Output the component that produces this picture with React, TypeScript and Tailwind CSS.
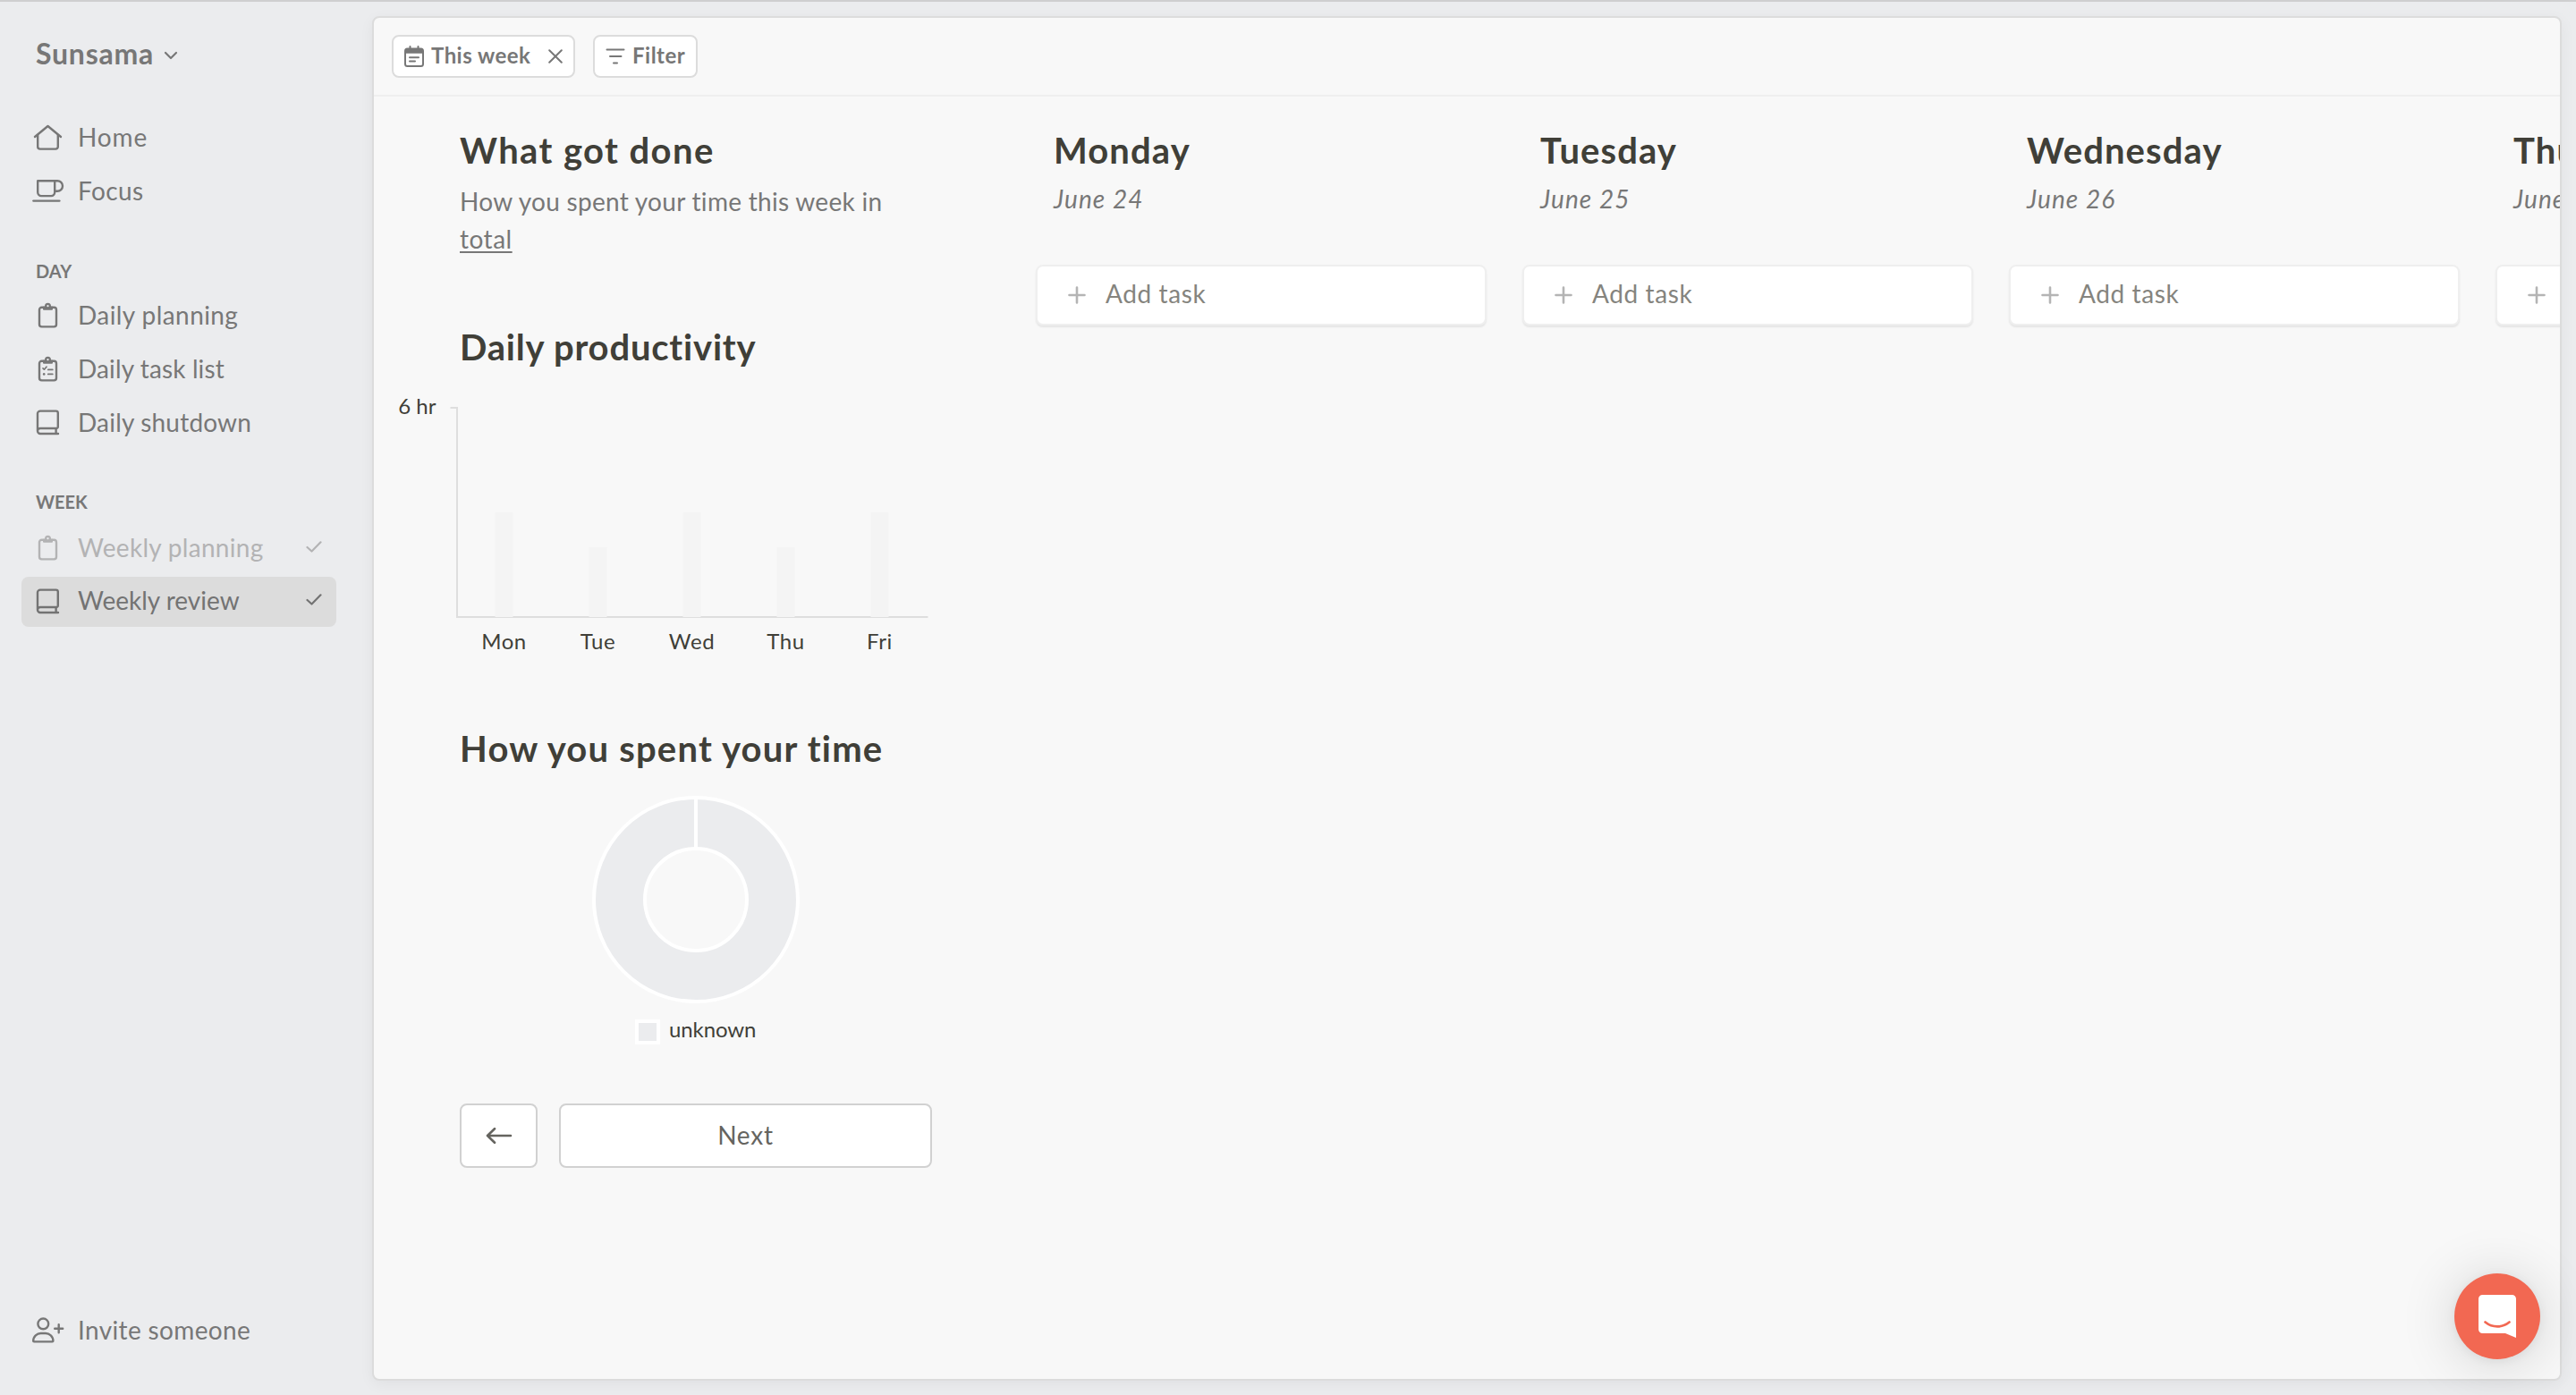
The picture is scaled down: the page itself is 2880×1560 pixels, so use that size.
import React from 'react';

type IconName = 'home' | 'cup' | 'clipboard' | 'tasks' | 'book' | 'invite';

function Clipboard({ withList }: { withList?: boolean }) {
  return (
    <>
      <rect x="8" y="8.8" width="19" height="21.6" rx="2.6" />
      <path d="M12 7.8h2.4a3.2 3.200 0 0 1 6.200 0H23v3a1 1 0 0 1-1 1h-9a1 1 0 0 1-1-1z" fill="currentColor" stroke="none" />
      <circle cx="17.5" cy="7.2" r="2.3" strokeWidth="2.4" className="fill-[#ebecee]" />
      {withList && (
        <>
          <path d="M12 16.800l1.400 1.400 2.600-3" strokeWidth="1.7" />
          <path d="M17.800 18.400h5M17.800 23.400h5" strokeWidth="1.8" />
          <circle cx="13.200" cy="23.400" r="1.3" fill="currentColor" stroke="none" />
        </>
      )}
    </>
  );
}

function Icon({ name }: { name: IconName }) {
  return (
    <svg
      className="h-9 w-9 shrink-0"
      viewBox="0 0 36 36"
      fill="none"
      stroke="currentColor"
      strokeWidth="2.4"
      strokeLinecap="round"
      strokeLinejoin="round"
    >
      {name === 'home' && (
        <>
          <path d="M3 17L17.500 5 32 17" />
          <path d="M6.200 15.200V28a2.600 2.600 0 0 0 2.600 2.600h17.400a2.600 2.600 0 0 0 2.600-2.600V15.200" />
        </>
      )}
      {name === 'cup' && (
        <>
          <path d="M6.200 6.200h19v12.900a4 4 0 0 1-4 4h-11a4 4 0 0 1-4-4z" />
          <path d="M25.200 6.200h3a5.800 5.800 0 0 1 0 11.600h-3" />
          <path d="M1.400 28.600h29" />
        </>
      )}
      {name === 'clipboard' && <Clipboard />}
      {name === 'tasks' && <Clipboard withList />}
      {name === 'book' && (
        <>
          <path d="M29 30H9a3 3 0 0 1-3-3V7.600a3 3 0 0 1 3-3h17.600a2.200 2.200 0 0 1 2.200 2.200v15.400a1.800 1.800 0 0 1-1.800 1.800H9a3 3 0 0 0-3 3" />
          <path d="M26.600 24.200v5.600" />
        </>
      )}
      {name === 'invite' && (
        <>
          <circle cx="12.300" cy="10.400" r="5.900" />
          <path d="M1.200 29.600c0-5.400 4.200-8.600 8.400-8.600h5.400c4.200 0 8.400 3.200 8.400 8.600 0 .5-.4.800-.9.800H2.100c-.5 0-.9-.3-.9-.8z" />
          <path d="M29.700 11.300v9M25.200 15.800h9" />
        </>
      )}
    </svg>
  );
}

function Check() {
  return (
    <svg className="mr-4 mb-1 ml-auto h-[13px] w-[18px]" viewBox="0 0 18 13" fill="none" stroke="currentColor" strokeWidth="2.200" strokeLinecap="round" strokeLinejoin="round">
      <path d="M1.500 7l5 4.500L16.500 1.300" />
    </svg>
  );
}

type Tone = 'normal' | 'muted' | 'active';

const toneClass: Record<Tone, string> = {
  normal: 'text-[#777777]',
  muted: 'text-[#b3b3b4]',
  active: 'bg-[#dcdcdc] text-[#737373]',
};

function NavItem({ icon, label, spacing, tone = 'normal', done }: { icon: IconName; label: string; spacing: string; tone?: Tone; done?: boolean }) {
  return (
    <div className={`flex h-14 items-center rounded-lg pl-3 ${toneClass[tone]}`}>
      <Icon name={icon} />
      <span className={`ml-[15px] pb-[3px] text-[28px] leading-none whitespace-nowrap ${spacing}`}>{label}</span>
      {done && <Check />}
    </div>
  );
}

function Sidebar() {
  return (
    <aside className="flex w-[416px] shrink-0 flex-col pr-10 pb-[44px] pl-6">
      <div className="mt-[38px] flex h-10 items-center pl-4 text-[#777777]">
        <span className="text-[32px] leading-10 font-bold tracking-[0.76px]">Sunsama</span>
        <svg className="mt-[3px] ml-[11px] h-2.5 w-4" viewBox="0 0 16 10" fill="none" stroke="currentColor" strokeWidth="2.200" strokeLinecap="round" strokeLinejoin="round">
          <path d="M2 2l6 6 6-6" />
        </svg>
      </div>
      <nav className="mt-[46px] flex flex-col gap-1">
        <NavItem icon="home" label="Home" spacing="tracking-[0.9px]" />
        <NavItem icon="cup" label="Focus" spacing="tracking-[0.4px]" />
      </nav>
      <h2 className="mt-[49px] pl-4 text-[20px] leading-6 font-bold text-[#777777]">DAY</h2>
      <nav className="mt-[10px] flex flex-col gap-[4px]">
        <NavItem icon="clipboard" label="Daily planning" spacing="tracking-[0.42px]" />
        <NavItem icon="tasks" label="Daily task list" spacing="tracking-[0.12px]" />
        <NavItem icon="book" label="Daily shutdown" spacing="tracking-[0.19px]" />
      </nav>
      <h2 className="mt-12 pl-4 text-[20px] leading-6 font-bold text-[#777777]">WEEK</h2>
      <nav className="mt-3 flex flex-col gap-[3.500px]">
        <NavItem icon="clipboard" label="Weekly planning" spacing="tracking-[0.3px]" tone="muted" done />
        <NavItem icon="book" label="Weekly review" spacing="tracking-[0px]" tone="active" done />
      </nav>
      <div className="mt-auto">
        <NavItem icon="invite" label="Invite someone" spacing="tracking-[0.36px]" />
      </div>
    </aside>
  );
}

function Toolbar() {
  return (
    <header className="flex h-[88px] shrink-0 items-center gap-5 border-b-2 border-[#efefef] pl-5 text-[24px] leading-none font-bold text-[#777777]">
      <button className="flex h-12 w-[205px] items-center rounded-lg border-2 border-[#dcdcdc] bg-white pl-3">
        <svg className="h-6 w-[22px]" viewBox="0 0 22 24" fill="none" stroke="currentColor" strokeWidth="2" strokeLinecap="round">
          <rect x="1" y="3.500" width="20" height="19.500" rx="2.500" />
          <path d="M1 8.800V5.500A2.500 2.500 0 0 1 3.500 3h15A2.500 2.500 0 0 1 21 5.500v3.300z" fill="currentColor" stroke="none" />
          <path d="M6.500 1v4M15.500 1v4" />
          <path d="M6 13.200h10M6 17.600h6" />
        </svg>
        <span className="ml-2 pb-[2px] tracking-[0.45px] whitespace-nowrap">This week</span>
        <svg className="ml-5 h-4 w-4" viewBox="0 0 16 16" fill="none" stroke="currentColor" strokeWidth="2" strokeLinecap="round">
          <path d="M1.200 1.200l13.600 13.600M14.800 1.200L1.200 14.800" />
        </svg>
      </button>
      <button className="flex h-12 w-[117px] items-center rounded-lg border-2 border-[#dcdcdc] bg-white pl-3">
        <svg className="h-[18px] w-[22px]" viewBox="0 0 22 18" fill="none" stroke="currentColor" strokeWidth="2" strokeLinecap="round">
          <path d="M1.500 1.500h19M5 9h12.500M9 16.500h4" />
        </svg>
        <span className="ml-2 pb-[2px] tracking-[0.5px]">Filter</span>
      </button>
    </header>
  );
}

const bars = [
  { day: 'Mon', x: 119.5, top: 132.7 },
  { day: 'Tue', x: 224.5, top: 171.7 },
  { day: 'Wed', x: 329.5, top: 132.7 },
  { day: 'Thu', x: 434.5, top: 171.7 },
  { day: 'Fri', x: 539.5, top: 132.7 },
];

function ProductivityChart() {
  return (
    <svg className="mt-[28px] -ml-20 h-[300px] w-[608px] shrink-0" viewBox="0 0 608 300">
      <path d="M69.500 16H77v234h526.500" fill="none" stroke="#dedede" strokeWidth="2" />
      <text x="53.5" y="23" textAnchor="end" fontSize="24" fill="#403f38">6 hr</text>
      {bars.map((b) => (
        <g key={b.day}>
          <rect x={b.x} y={b.top} width="20" height={250 - b.top} fill="#f4f4f4" />
          <text x={b.x + 10} y="285.5" textAnchor="middle" fontSize="24" letterSpacing="0.6" fill="#403f38">{b.day}</text>
        </g>
      ))}
    </svg>
  );
}

function Summary() {
  return (
    <section className="flex w-[528px] shrink-0 flex-col pt-[36px] text-[#403f38]">
      <h1 className="text-[40px] leading-[48px] font-bold tracking-[1.4px]">What got done</h1>
      <p className="mt-[12px] text-[28px] leading-[42px] tracking-[0.29px] text-[#777777]">
        How you spent your time this week in <span className="tracking-[0.5px] underline decoration-2 underline-offset-[3px]">total</span>
      </p>
      <h1 className="mt-[76px] text-[40px] leading-[48px] font-bold tracking-[0.8px]">Daily productivity</h1>
      <ProductivityChart />
      <h1 className="mt-[73px] text-[40px] leading-[48px] font-bold tracking-[1.2px] whitespace-nowrap">How you spent your time</h1>
      <svg className="mt-[29px] h-[232px] w-[232px] shrink-0 self-center" viewBox="0 0 232 232" fill="none">
        <circle cx="116" cy="116" r="85.5" stroke="#ebecee" strokeWidth="57" />
        <circle cx="116" cy="116" r="114" stroke="#fff" strokeWidth="4" />
        <circle cx="116" cy="116" r="57" stroke="#fff" strokeWidth="4" />
        <path d="M116 2v57" stroke="#fff" strokeWidth="4" />
      </svg>
      <div className="mt-[18px] flex h-7 items-center pl-[196px]">
        <span className="h-7 w-7 border-4 border-white bg-[#ebecee]" />
        <span className="ml-[10px] pb-[7px] text-[24px] leading-none tracking-[-0.1px]">unknown</span>
      </div>
      <div className="mt-[66px] flex gap-6 text-[#65645f]">
        <button className="flex h-[72px] w-[87px] items-center justify-center rounded-lg border-2 border-[#d1d1d1] bg-white">
          <svg className="h-[18px] w-[30px]" viewBox="0 0 30 18" fill="none" stroke="currentColor" strokeWidth="2.600" strokeLinecap="round" strokeLinejoin="round">
            <path d="M28 9H2M10 1.200L2 9l8 7.800" />
          </svg>
        </button>
        <button className="h-[72px] grow rounded-lg border-2 border-[#d1d1d1] bg-white pb-0.5 text-[28px] leading-none tracking-[0.8px]">Next</button>
      </div>
    </section>
  );
}

const days = [
  { name: 'Monday', date: 'June 24' },
  { name: 'Tuesday', date: 'June 25' },
  { name: 'Wednesday', date: 'June 26' },
  { name: 'Thursday', date: 'June 27' },
];

function DayColumn({ name, date }: { name: string; date: string }) {
  return (
    <section className="w-[504px] shrink-0 pt-[36px]">
      <h1 className="pl-5 text-[40px] leading-[48px] font-bold tracking-[1.1px] text-[#403f38]">{name}</h1>
      <p className="mt-[9px] pl-5 text-[28px] leading-[42px] tracking-[1.1px] text-[#777777] italic">{date}</p>
      <div className="mt-[53px] flex h-[68px] items-center rounded-lg border-2 border-[#efefef] bg-white pl-[34px] shadow-[0_2px_2px_rgba(0,0,0,0.08)]">
        <svg className="h-5 w-5" viewBox="0 0 20 20" fill="none" stroke="#b4b4b4" strokeWidth="2.600" strokeLinecap="round">
          <path d="M10 1.500v17M1.500 10h17" />
        </svg>
        <span className="ml-[22px] pb-[4px] text-[28px] leading-none tracking-[0.6px] text-[#85847e]">Add task</span>
      </div>
    </section>
  );
}

export default function App() {
  return (
    <div className="relative flex h-[1560px] w-[2880px] overflow-hidden border-t-2 border-[#cfcfd0] bg-[#ebecee] font-['Lato','Noto_Sans',sans-serif]">
      <Sidebar />
      <main className="mt-4 mr-4 mb-4 flex grow flex-col overflow-hidden rounded-lg border-2 border-[#dcdcdc] bg-[#f8f8f8] shadow-[0_4px_16px_rgba(0,0,0,0.05)]">
        <Toolbar />
        <div className="flex grow overflow-hidden pl-24">
          <Summary />
          <div className="ml-[116px] flex gap-10">
            {days.map((d) => (
              <DayColumn key={d.name} name={d.name} date={d.date} />
            ))}
          </div>
        </div>
      </main>
      <button className="absolute right-10 bottom-10 flex h-24 w-24 items-center justify-center rounded-full bg-[#f26852] shadow-[0_2px_12px_rgba(0,0,0,0.06),0_4px_64px_rgba(0,0,0,0.16)]">
        <svg className="h-12 w-[42px]" viewBox="0 0 42 48">
          <path d="M4.500 0h33A4.500 4.500 0 0 1 42 4.500V48l-12-5H4.500A4.500 4.500 0 0 1 0 38.500v-34A4.500 4.500 0 0 1 4.500 0z" fill="#fff" />
          <path d="M7.500 30.500c8 6.500 19 6.500 27 0" fill="none" stroke="#f26852" strokeWidth="2.700" strokeLinecap="round" />
        </svg>
      </button>
    </div>
  );
}
